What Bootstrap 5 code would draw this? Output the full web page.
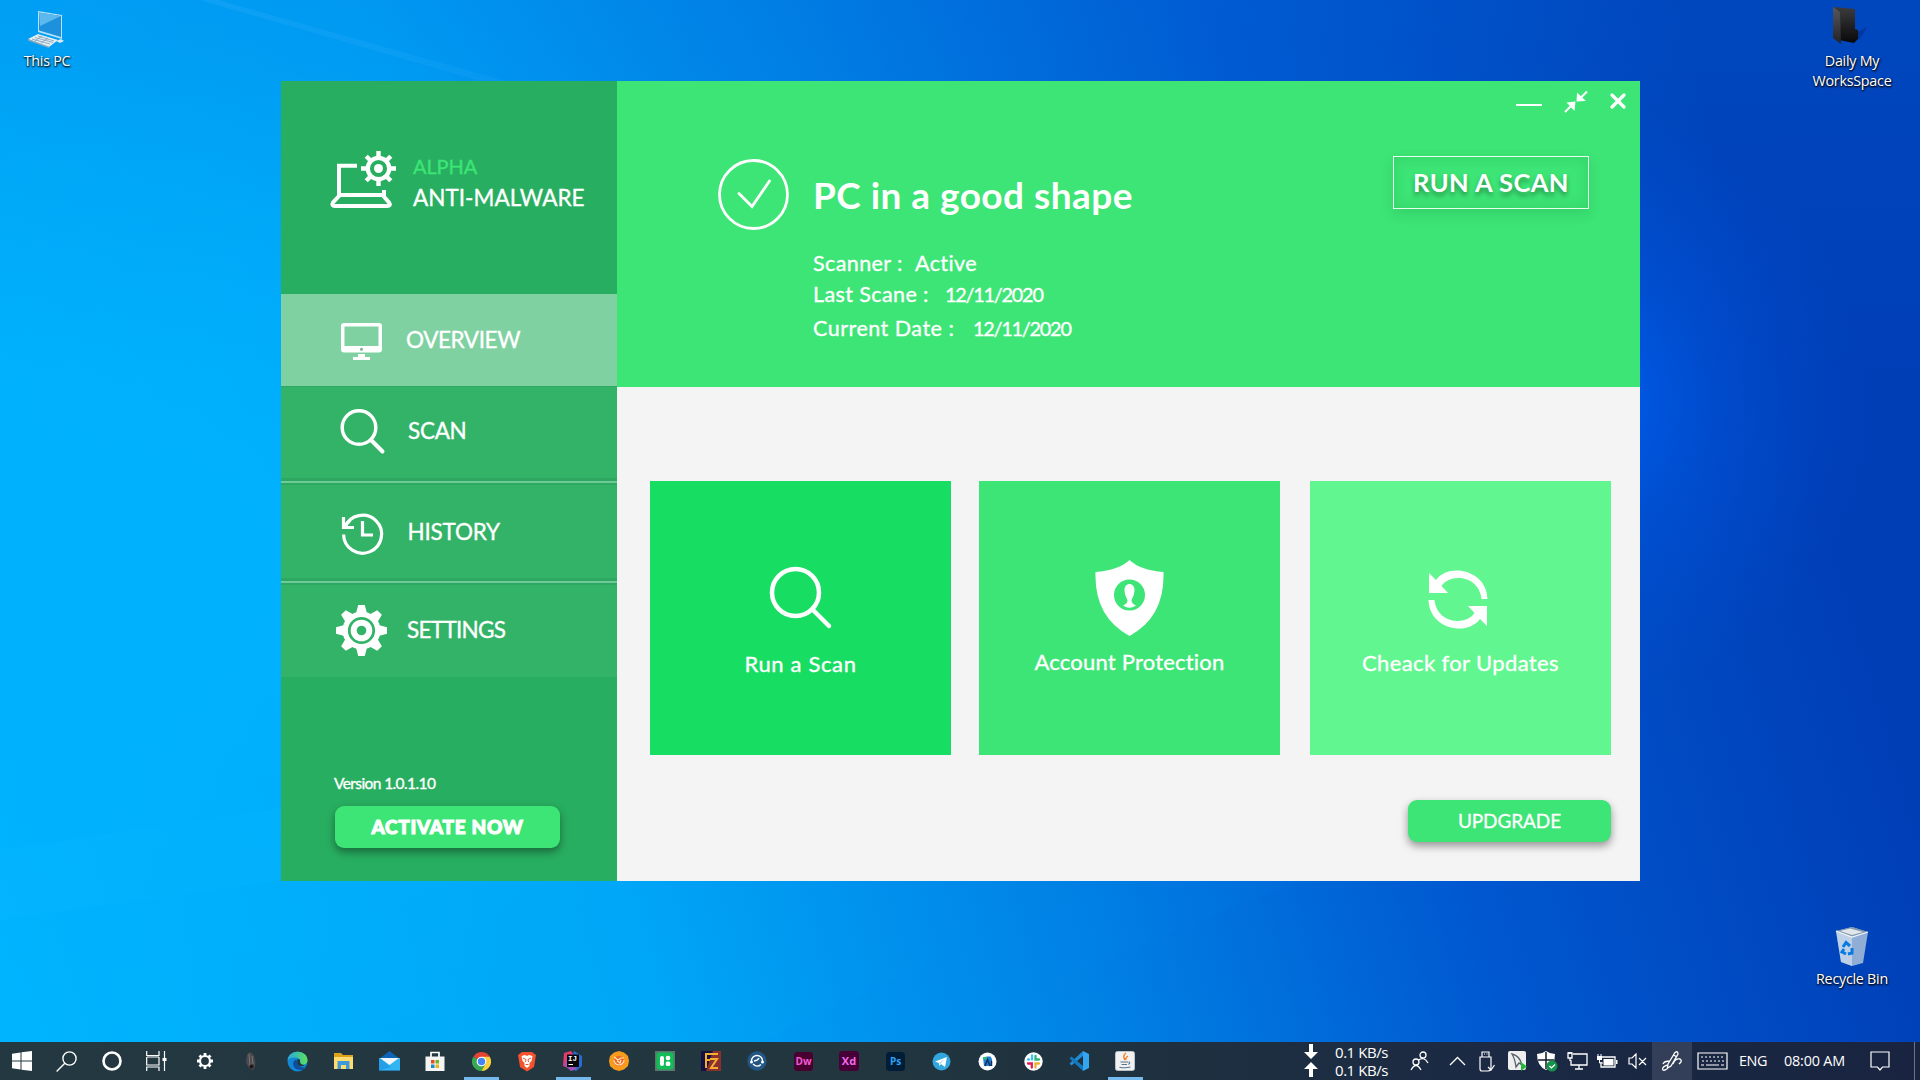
<!DOCTYPE html>
<html lang="en">
<head>
<meta charset="utf-8">
<meta name="viewport" content="width=device-width, initial-scale=1">
<title>Alpha Anti-Malware</title>
<link href="https://cdn.jsdelivr.net/npm/bootstrap@5.3.0/dist/css/bootstrap.min.css" rel="stylesheet">
<style>
  html, body { height: 100%; }
  body { margin: 0; overflow: hidden; font-family: Lato, "Liberation Sans", sans-serif; font-variant-ligatures: none; background: #0078e0; }
  svg { display: block; flex: none; }
  .desktop { width: 1920px; height: 1080px; }
  .wallpaper { position: absolute; left: 0; top: 0; }

  /* desktop shortcuts */
  .shortcut { position: absolute; width: 110px; font: 14.3px/20px "Open Sans", "Noto Sans", sans-serif; letter-spacing: -.25px; text-shadow: 0 1px 2px #000, 1px 1px 2px rgba(0,0,0,.7); }
  .at-pc { left: -8px; top: 9px; }
  .at-work { left: 1797px; top: 5px; }
  .at-work svg { margin-right: 4px; }
  .at-bin { left: 1797px; top: 922px; }

  /* application window */
  .app-window { position: absolute; left: 281px; top: 81px; width: 1359px; height: 800px; }
  .app-side { width: 336px; background: #28ae60; -webkit-text-stroke: .35px currentColor; }
  .brand-row { height: 213px; padding: 69px 0 0 48px; gap: 15px; }
  .brand-top { font-size: 20px; line-height: 24px; color: #3ce575; padding-top: 4px; letter-spacing: -.1px; }
  .brand-name { font-size: 22.5px; line-height: 24px; margin-top: 8px; letter-spacing: .03px; white-space: nowrap; }
  .side-link { height: 98px; padding-left: 52px; background: #33b368; color: #fff; font-size: 22.5px; gap: 17px; border: 0; border-radius: 0; }
  .side-link svg { margin: 0 -2px 0 -2px; }
  .side-link.is-current { height: 92px; background: #7fd1a2; }
  .side-link.is-scan { height: 95px; padding-bottom: 5px; box-shadow: inset 0 1px #2da762, inset 0 -3px #2da762; }
  .side-link.is-hist { height: 100px; border-top: 2px solid #6fcb95; box-shadow: inset 0 2px #2da762, inset 0 -3px #2da762; }
  .side-link.is-hist svg { margin-top: 3px; }
  .side-link.is-set { height: 96px; border-top: 2px solid #6fcb95; box-shadow: inset 0 2px #2da762; }
  .t-over { letter-spacing: -.4px; } .t-scan { letter-spacing: -.3px; padding-left: 2px; }
  .t-hist { letter-spacing: -.2px; padding-left: 1.5px; } .t-set { letter-spacing: -.7px; padding-left: 1px; }
  .side-foot { padding: 0 0 33px 54px; }
  .version { font-size: 15.5px; line-height: 20px; margin: 0 0 13px -1px; letter-spacing: -.6px; }
  .pill { height: 42px; border: 0; border-radius: 9px; background: #3ce575; color: #fff; padding: 0; box-shadow: 0 4px 9px rgba(0,0,0,.4); }
  .pill-act { width: 225px; font-size: 19px; font-weight: 900; letter-spacing: .7px; -webkit-text-stroke: 1.1px #fff; }
  .pill-upg { width: 203px; font-size: 19px; letter-spacing: -.1px; -webkit-text-stroke: .3px #fff; }

  .status { height: 306px; background: #3ce575; padding: 0; }
  .status-left { padding: 78px 0 0 101px; gap: 24px; }
  .status-title { font-size: 37px; line-height: 72px; height: 70px; font-weight: 700; letter-spacing: .45px; white-space: nowrap; }
  .fact { height: 31px; font-size: 21.5px; line-height: 31px; white-space: nowrap; -webkit-text-stroke: .35px #fff; letter-spacing: .4px; }
  .fact span { display: inline-block; }
  .fact .day { font-size: 19.8px; letter-spacing: -1.2px; }
  .w-scanner { width: 102px; } .w-last { width: 132px; } .w-current { width: 160px; letter-spacing: .5px; }
  .fact-first { margin-top: 19px; }
  .fact-last { margin-top: 3px; }
  .win-tools { padding: 9px 13px 0 0; height: 34px; }
  .btn-scan { width: 196px; height: 53px; border: 1px solid #e6ffee; border-radius: 0; color: #fff; font-size: 25.5px; font-weight: 700; letter-spacing: .45px; padding: 0; margin: 41px 51px 0 0; text-shadow: 0 4px 5px rgba(0,0,0,.35); box-shadow: inset 0 0 14px rgba(0,70,20,.12), 0 5px 12px rgba(0,70,20,.13); }
  .main-area { background: #f4f4f4; padding: 94px 29px 39px 33px; }
  .tile { width: 301px; height: 274px; border: 0; border-radius: 0; color: #fff; font-size: 22px; }
  .tile span { line-height: 28px; white-space: nowrap; -webkit-text-stroke: .35px #fff; }
  .tile-1 { background: #18dd63; padding-top: 85px; }
  .tile-2 { background: #3ce575; padding-top: 78px; margin-left: 28px; }
  .tile-3 { background: #61f68f; padding-top: 89px; margin-left: 30px; }
  .tile-3 svg { margin-right: 6px; }
  .c-scan { margin-top: 20px; letter-spacing: .65px; } .c-acc { margin-top: 11px; letter-spacing: .2px; } .c-upd { margin-top: 19px; letter-spacing: .38px; }

  /* taskbar */
  .taskbar { position: absolute; left: 0; top: 1042px; width: 1920px; height: 38px; background: linear-gradient(90deg, #233840 0, #21363f 45%, #1e3040 62%, #1b2944 78%, #182440 100%); font: 14.4px/18px "Open Sans", "Noto Sans", sans-serif; }
  .slot { width: 46px; height: 38px; display: flex; align-items: center; justify-content: center; flex: none; }
  .slot.sys { width: 45px; }
  .slot.first-slot { width: 44px; }
  .slot.view { width: 48px; padding-right: 4px; }
  .slot.open { background: linear-gradient(#76b9ed, #76b9ed) center bottom / 35px 3px no-repeat; }
  .tray { width: 30px; height: 38px; display: flex; align-items: center; justify-content: center; flex: none; }
  .tray.pen { width: 40px; background: #333f58; }
  .tray-people { width: 44px; }
  .tray-keys { width: 40px; }
  .tray-note { width: 37px; }
  .net { width: 63px; letter-spacing: -.45px; font-size: 15px; white-space: nowrap; }
  .lang { width: 43px; padding-left: 7px; letter-spacing: -.4px; }
  .clock { width: 86px; padding-left: 9px; letter-spacing: -.2px; white-space: nowrap; }
  .peek { width: 22px; height: 38px; padding-left: 16px; }
</style>
</head>
<body>
<div class="desktop position-relative overflow-hidden text-white">

<svg class="wallpaper" width="1920" height="1080" viewBox="0 0 1920 1080">
  <defs>
    <linearGradient id="sky" x1="0" y1="950" x2="1800" y2="430" gradientUnits="userSpaceOnUse">
      <stop offset="0" stop-color="#00b4fd"/><stop offset=".33" stop-color="#00a6f7"/><stop offset=".55" stop-color="#0082e5"/><stop offset=".76" stop-color="#0058d0"/><stop offset="1" stop-color="#003eb6"/>
    </linearGradient>
    <radialGradient id="glow" cx="1570" cy="400" r="300" gradientUnits="userSpaceOnUse">
      <stop offset="0" stop-color="#0064fa" stop-opacity=".9"/><stop offset=".45" stop-color="#0058e6" stop-opacity=".45"/><stop offset="1" stop-color="#0050d8" stop-opacity="0"/>
    </radialGradient>
    <radialGradient id="leftglow" cx="200" cy="560" r="520" gradientUnits="userSpaceOnUse">
      <stop offset="0" stop-color="#00b4ff" stop-opacity=".8"/><stop offset="1" stop-color="#00b0ff" stop-opacity="0"/>
    </radialGradient>
    <linearGradient id="topshade" x1="0" y1="0" x2="0" y2="1"><stop offset="0" stop-color="#0068dc" stop-opacity=".22"/><stop offset=".35" stop-color="#0068dc" stop-opacity="0"/></linearGradient>
    <linearGradient id="beam" x1="200" y1="0" x2="620" y2="90" gradientUnits="userSpaceOnUse"><stop offset="0" stop-color="#3fb8ff" stop-opacity=".22"/><stop offset="1" stop-color="#2aa4ff" stop-opacity=".12"/></linearGradient>
  </defs>
  <rect width="1920" height="1080" fill="url(#sky)"/>
  <rect width="1920" height="1080" fill="url(#topshade)"/>
  <rect width="1920" height="1080" fill="url(#leftglow)"/>
  <rect width="1920" height="1080" fill="url(#glow)"/>
  <path d="M200 0H218L505 81H480Z" fill="url(#beam)"/>
  <path d="M0 850L281 808V881L0 920Z" fill="#2ac4ff" fill-opacity=".06"/>
  <path d="M760 1042L1110 881H1300L900 1042Z" fill="#0090f0" fill-opacity=".08"/>
</svg>

<div class="shortcut at-pc d-flex flex-column align-items-center text-center">
  <svg width="40" height="42" viewBox="0 0 40 42"><path d="M11 2L35 6V30L11 23Z" fill="#b9e2f8"/><path d="M12 3.500L34 7V28L12 21.500Z" fill="#1e91dc"/><path d="M12 3.500L34 7L13 17Z" fill="#5bb9ee"/><path d="M1 30L11 25L31 31L22 38Z" fill="#e4eef5"/><path d="M1 30L22 37.500V39L1 31.500Z" fill="#96aab8"/><path d="M5 30L23 35M8 28.500L26 33.500M11 27L27 32M8 32L15 27M14 34L21 29" stroke="#7d9cb2" stroke-width=".8"/><path d="M29 32L34 30L37 32L33 34Z" fill="#dce9f2"/></svg>
  <div>This PC</div>
</div>
<div class="shortcut at-work d-flex flex-column align-items-center text-center">
  <svg width="46" height="46" viewBox="0 0 46 46"><defs><linearGradient id="fold" x2="0" y2="1"><stop stop-color="#3c3c40"/><stop offset="1" stop-color="#08080a"/></linearGradient><linearGradient id="flap" x2="0" y2="1"><stop stop-color="#58585c"/><stop offset="1" stop-color="#222226"/></linearGradient></defs><path d="M29 28L40 22L32 35Z" fill="#02277c" opacity=".5"/><path d="M7 2L28 4V24L31 25V34L27 38L12 35Z" fill="url(#fold)"/><path d="M6 2L13 7L14 39L6 33Z" fill="url(#flap)"/></svg>
  <div>Daily My<br>WorksSpace</div>
</div>
<div class="shortcut at-bin d-flex flex-column align-items-center text-center">
  <svg width="40" height="47" viewBox="0 0 40 47"><path d="M4 9L20 5L36 10L31 41L20 44L9 40Z" fill="#b4c8dc" fill-opacity=".8"/><path d="M4 9L20 14L20 44L9 40Z" fill="#dde8f1" fill-opacity=".6"/><path d="M4 9L20 5L36 10L20 15Z" fill="#8298ab"/><path d="M8 9L18 6.500L31 10L20 13Z" fill="#dfe6ec"/><path d="M4 9L20 15L36 10" fill="none" stroke="#eef6fb" stroke-width="1.200"/><g fill="none" stroke="#087be0" stroke-width="3"><path d="M11 25L14 20.500L18 24M20 26L20 31L16 32M14 32L10 30L12 27"/></g></svg>
  <div>Recycle Bin</div>
</div>

<main class="app-window d-flex">
  <aside class="app-side d-flex flex-column">
    <div class="brand-row d-flex">
      <svg width="69" height="60" viewBox="329 150 69 60" fill="none" stroke="#fff">
        <path d="M357 165.800H339V195M337 195H384V190" stroke-width="4"/>
        <path d="M340 195L333 202.500Q331 206 335 206H387Q391.500 206 389 202.500L382.500 195" stroke-width="4"/>
        <circle cx="378.500" cy="168.500" r="10.700" stroke-width="4.300"/><circle cx="378.500" cy="168.500" r="4.500" fill="#fff" stroke="none"/>
        <path d="M378.500 151V158M378.500 179V186M361 168.500H368M389 168.500H396M366.200 156.200L371 161M386 176L390.800 180.800M366.200 180.800L371 176M386 161L390.800 156.200" stroke-width="4.400"/>
      </svg>
      <div><div class="brand-top">ALPHA</div><div class="brand-name">ANTI-MALWARE</div></div>
    </div>
    <nav class="list-group list-group-flush">
      <a class="side-link is-current d-flex align-items-center text-decoration-none">
        <svg width="60" height="60" viewBox="331 310 60 60"><path d="M344 323H379Q382 323 382 326V349Q382 352.500 379 352.500H344Q341 352.500 341 349V326Q341 323 344 323ZM344.500 326.500V346H378.500V326.500Z" fill="#fff" fill-rule="evenodd"/><circle cx="361.500" cy="349.200" r="1.500" fill="#73b58f"/><path d="M358 354H365V357H370V360H353V357H358Z" fill="#fff"/></svg>
        <span class="t-over">OVERVIEW</span></a>
      <a class="side-link is-scan d-flex align-items-center text-decoration-none">
        <svg width="60" height="60" viewBox="331 401 60 60" fill="none" stroke="#fff" stroke-width="3.500" stroke-linecap="round"><circle cx="359" cy="427.500" r="16.800"/><path d="M371 440L382.500 451.500" stroke-width="4"/></svg>
        <span class="t-scan">SCAN</span></a>
      <a class="side-link is-hist d-flex align-items-center text-decoration-none">
        <svg width="60" height="60" viewBox="331 502 60 60" fill="none" stroke="#fff" stroke-width="3.200"><path d="M345 525A19 19 0 1 1 343.600 532.500"/><path d="M343.500 515V525.500H354M344 525L350 518.500"/><path d="M362.500 519V533H373"/></svg>
        <span class="t-hist">HISTORY</span></a>
      <a class="side-link is-set d-flex align-items-center text-decoration-none">
        <svg width="60" height="60" viewBox="-30.500 -30.500 60 60"><g fill="#fff"><circle r="19"/><g id="tooth"><path d="M-5.500 -17L-3.300 -25.500H3.300L5.500 -17ZM-5.500 17L-3.300 25.500H3.300L5.500 17Z"/><path d="M-17 -5.500L-25.500 -3.300V3.300L-17 5.500ZM17 -5.500L25.500 -3.300V3.300L17 5.500Z"/></g><use href="#tooth" transform="rotate(45)"/></g><circle r="12.200" fill="none" stroke="#33b368" stroke-width="2.800"/><circle r="4.800" fill="#33b368"/></svg>
        <span class="t-set">SETTINGS</span></a>
    </nav>
    <div class="side-foot mt-auto">
      <div class="version">Version 1.0.1.10</div>
      <button class="btn pill pill-act">ACTIVATE NOW</button>
    </div>
  </aside>

  <div class="flex-grow-1 d-flex flex-column">
    <header class="status d-flex justify-content-between">
      <div class="status-left d-flex">
        <svg width="71" height="71" viewBox="0 0 71 71" fill="none" stroke="#fff" stroke-width="2.800"><circle cx="35.500" cy="35.500" r="34"/><path d="M21 34.500L34 47.500L51.500 22" stroke-linecap="round"/></svg>
        <div>
          <div class="status-title">PC in a good shape</div>
          <div class="fact fact-first"><span class="w-scanner">Scanner :</span><span>Active</span></div>
          <div class="fact"><span class="w-last">Last Scane :</span><span class="day">12/11/2020</span></div>
          <div class="fact fact-last"><span class="w-current">Current Date :</span><span class="day">12/11/2020</span></div>
        </div>
      </div>
      <div class="d-flex flex-column align-items-end">
        <div class="win-tools d-flex">
          <svg width="112" height="25" viewBox="1515 90 112 25" fill="none" stroke="#fff"><path d="M1516 105H1542" stroke-width="2"/><path d="M1565 112L1572 105M1587 91.500L1579 99.500" stroke-width="2"/><path d="M1566.500 102.500L1575.500 101.500L1574.500 111Z" fill="#fff" stroke="none"/><path d="M1577 92.500L1576.500 101.500L1586 101Z" fill="#fff" stroke="none"/><path d="M1612 95L1624 107M1624 95L1612 107" stroke-width="3.300" stroke-linecap="round"/></svg>
        </div>
        <button class="btn btn-scan">RUN A SCAN</button>
      </div>
    </header>
    <section class="main-area flex-grow-1 d-flex flex-column">
      <div class="d-flex">
        <div class="card tile tile-1 align-items-center">
          <svg width="64" height="64" viewBox="769 566 64 64" fill="none" stroke="#fff" stroke-width="4.500" stroke-linecap="round"><circle cx="795.500" cy="592.500" r="23.500"/><path d="M812.500 609.500L829 626"/></svg>
          <span class="c-scan">Run a Scan</span>
        </div>
        <div class="card tile tile-2 align-items-center">
          <svg width="70" height="78" viewBox="1095 559 70 78"><path d="M1129.500 560Q1140 570 1163.500 572Q1165 617 1129.500 636Q1094 617 1095.500 572Q1119 570 1129.500 560Z" fill="#fff"/><circle cx="1129.500" cy="595" r="15.500" fill="#3ce575"/><path d="M1124.500 590C1124.500 582 1134.500 582 1134.500 590C1134.500 594 1133 597 1131.500 600C1131.500 603 1133 604 1136 605.500Q1129.500 610 1123 605.500C1126 604 1127.500 603 1127.500 600C1126 597 1124.500 594 1124.500 590Z" fill="#fff"/></svg>
          <span class="c-acc">Account Protection</span>
        </div>
        <div class="card tile tile-3 align-items-center">
          <svg width="60" height="60" viewBox="1428 570 60 60"><g id="half" fill="#fff"><path d="M1429 573V593H1448L1441.500 586C1450 573 1479 575 1481.500 599H1487.500C1487 570 1449 562 1436 580Z"/></g><use href="#half" transform="rotate(180 1458 599.500)"/></svg>
          <span class="c-upd">Cheack for Updates</span>
        </div>
      </div>
      <div class="d-flex justify-content-end mt-auto"><button class="btn pill pill-upg">UPDGRADE</button></div>
    </section>
  </div>
</main>

<footer class="taskbar d-flex justify-content-between">
  <div class="d-flex">
    <div class="slot first-slot"><svg width="20" height="20" viewBox="0 0 20 20" fill="#fff"><path d="M0 2.700L8.500 1.500V9.500H0ZM9.500 1.300L20 0V9.500H9.500ZM0 10.500H8.500V18.500L0 17.300ZM9.500 10.500H20V20L9.500 18.700Z"/></svg></div>
    <div class="slot sys"><svg width="21" height="21" viewBox="0 0 21 21" fill="none" stroke="#fff" stroke-width="1.400"><circle cx="13.500" cy="7.500" r="6.600"/><path d="M8.800 12.200L.6 20.400"/></svg></div>
    <div class="slot sys"><svg width="20" height="20"><circle cx="10" cy="10" r="8.500" fill="none" stroke="#fff" stroke-width="2.600"/></svg></div>
    <div class="slot view"><svg width="21" height="20" fill="none" stroke="#fff" stroke-width="1.200"><path d="M.7 0V4.500H13V0M.7 20V16H13V20M.7 6V14H13V6M1 6H13M18.500 0V20"/><path d="M16.500 7H20.500V10H16.500Z" fill="#fff" stroke="none"/></svg></div>
    <div class="slot"><svg width="18" height="18" viewBox="-9 -9 18 18" fill="none" stroke="#fff"><circle r="5" stroke-width="2.200"/><g stroke-width="2.800"><path d="M0-8V-5M0 8V5M-8 0H-5M8 0H5M-5.500-5.500L-3.700-3.700M5.500 5.500L3.700 3.700M-5.500 5.500L-3.700 3.700M5.500-5.500L3.700-3.700"/></g></svg></div>
    <div class="slot"><svg width="12" height="20"><path d="M2 4Q5-2 9 5Q12 15 8 19Q2 17 1 10Z" fill="#4d4a4d"/><path d="M4 3L5 15M7 5L8 13" stroke="#777476" stroke-width="1"/><circle cx="6.500" cy="15.500" r="2" fill="#241316"/></svg></div>
    <div class="slot"><svg width="21" height="21" viewBox="0 0 21 21"><defs><linearGradient id="eg"><stop stop-color="#27a9e0"/><stop offset="1" stop-color="#5ce15b"/></linearGradient></defs><circle cx="10.500" cy="10.500" r="10" fill="#1287d5"/><path d="M.5 9.500C1-2.500 20.500-2 20.500 9C20.500 14.500 13.500 15 12.500 12.500C14.500 10 12 6.500 8.500 6.500C4 6.500 1 8 .5 9.500Z" fill="url(#eg)"/><path d="M9.500 8.500C4 9.500 5 19 13.500 19C16 19 18 17.500 19 16C14 18 10 14 9.500 8.500Z" fill="#0c4f9d"/><path d="M10 9Q13.500 6.500 13 11Q13.500 14 18 14Q13 17 10.500 13Z" fill="#21363f"/></svg></div>
    <div class="slot"><svg width="19" height="18"><path d="M0 1H7L9 3H19V17H0Z" fill="#dda21b"/><path d="M0 5H19V17H0Z" fill="#ffdc72"/><path d="M3.500 17V9H15.500V17H12V13H7V17Z" fill="#3e9ad6"/></svg></div>
    <div class="slot"><svg width="21" height="20"><path d="M0 8L10.500 0L21 8V19.500H0Z" fill="#0e65b8"/><path d="M0 7H21V19.500H0Z" fill="#31b5f2"/><path d="M1 7H20L10.500 14Z" fill="#f0f6fb"/><path d="M0 7L12 16L0 19.500Z" fill="#1688db" opacity=".5"/></svg></div>
    <div class="slot"><svg width="20" height="21"><path d="M6 6V1.500H14V6" fill="none" stroke="#fff" stroke-width="1.700"/><path d="M.5 5.500H19.500V20H.5Z" fill="#f5f5f5"/><path fill="#e84c22" d="M6 9H9.500V12.500H6Z"/><path fill="#73b51c" d="M10.500 9H14V12.500H10.500Z"/><path fill="#168dd2" d="M6 13.500H9.500V17H6Z"/><path fill="#f0b316" d="M10.500 13.500H14V17H10.500Z"/></svg></div>
    <div class="slot open"><svg width="19" height="19" viewBox="-10 -10 20 20"><path d="M0 0L-8.500-5A10 10 0 0 1 8.700-5Z" fill="#e34435"/><path d="M0 0L-8.700-5A10 10 0 0 0 0 10L4.500 2Z" fill="#38a852"/><path d="M0-5H8.700A10 10 0 0 1 0 10L5 1Z" fill="#fcd03d"/><circle r="5.100" fill="#fff"/><circle r="3.900" fill="#4285f4"/></svg></div>
    <div class="slot"><svg width="18" height="21" viewBox="0 0 18 21"><path d="M4 1H14L18 4L16 16L9 20.500L2 16L0 4Z" fill="#f4512c"/><path d="M3.500 5L7 4L9 5L11 4L14.500 5L13.500 10L11.500 12V15L9 17L6.500 15V12L4.500 10Z" fill="#fff"/><path d="M5 7L8 8.500L7.500 11M13 7L10 8.500L10.500 11M7.500 13.500H10.500" fill="none" stroke="#f4512c" stroke-width="1"/></svg></div>
    <div class="slot open"><svg width="20" height="20" viewBox="0 0 20 20"><path d="M1 2L8 0L12 5L5 17L0 15Z" fill="#e33c70"/><path d="M11 0L19 5V15L13 20L7 17Z" fill="#256ed0"/><path d="M1 14L8 20L14 18L4 9Z" fill="#9d53bb"/><path d="M4 3.500H16V16H4Z" fill="#080808"/><text x="5" y="10" font-size="7.500" font-weight="700" font-family="Liberation Mono, monospace" fill="#fff">IJ</text><path d="M5.500 13.500H10" stroke="#fff"/></svg></div>
    <div class="slot"><svg width="20" height="20" viewBox="-10 -10 20 20"><path d="M0-10L5-8.500L9-5L10 0L9 5L5 8.500L0 10L-5 8.500L-9 5L-10 0L-9-5L-5-8.500Z" fill="#f89b1c"/><circle r="5.300" fill="#ef6628"/><path d="M-5-4L-1-1L2-3L5-3M5-1A5 5 0 1 1-5-1M-2 0L1 2L2-1" fill="none" stroke="#ffe7ba" stroke-width="1.200"/></svg></div>
    <div class="slot"><svg width="20" height="20"><path d="M0 0H20V20H0Z" fill="#57796d"/><rect x="1.500" y="1.500" width="17" height="17" rx="3" fill="#12bd58"/><rect x="5" y="5" width="4" height="10" rx="2" fill="#fff"/><circle cx="13" cy="7" r="2.300" fill="#fff"/><rect x="10.800" y="10.500" width="4.500" height="4.500" rx="1.500" fill="#fff"/></svg></div>
    <div class="slot"><svg width="20" height="20"><path d="M0 0H20V20H0Z" fill="#151243"/><path d="M12 0H20V20H5Z" fill="#8a302e"/><path d="M5 17V3H17M5 9H9M9 8H16L10 17H17" fill="none" stroke="#f6ae2e" stroke-width="2"/></svg></div>
    <div class="slot"><svg width="20" height="20"><circle cx="10" cy="10" r="9.700" fill="#245683"/><path d="M4.500 10A5.500 5.500 0 1 1 15.500 10M6 13Q10 17 14 13.500M7 10Q11 9.500 12 7" fill="none" stroke="#fff" stroke-width="1.400"/><circle cx="4.500" cy="11" r="1.500" fill="#fff"/><circle cx="15.500" cy="11" r="1.500" fill="#fff"/></svg></div>
    <div class="slot"><svg width="19" height="19"><rect width="19" height="19" rx="3.500" fill="#47002f"/><text x="9.500" y="13" text-anchor="middle" font-size="10" font-weight="700" font-family="Open Sans, sans-serif" fill="#f45bd4">Dw</text></svg></div>
    <div class="slot"><svg width="20" height="20"><rect width="20" height="20" rx="3.500" fill="#470037"/><text x="10" y="14" text-anchor="middle" font-size="11" font-weight="700" font-family="Open Sans, sans-serif" fill="#f26bea">Xd</text></svg></div>
    <div class="slot"><svg width="19" height="19"><rect width="19" height="19" rx="3.500" fill="#001d38"/><text x="9.500" y="13" text-anchor="middle" font-size="10" font-weight="700" font-family="Open Sans, sans-serif" fill="#31a0f5">Ps</text></svg></div>
    <div class="slot"><svg width="19" height="19"><circle cx="9.500" cy="9.500" r="9" fill="#31a7dd"/><path d="M3 9.500L15 5L13 15L9 12L7.500 14L6.800 11Z" fill="#fff"/><path d="M7 11L12.500 7L8.500 12Z" fill="#b9d9e9"/></svg></div>
    <div class="slot"><svg width="19" height="19"><circle cx="9.500" cy="9.500" r="9" fill="#fff"/><path d="M5 5.500L9 4.500H12.500L14 7V14H6Z" fill="#247ed5"/><path d="M5 5H9V7.500H5Z" fill="#2abf77"/><path d="M7 14L9.500 7.500L12 14M13.500 9V14" fill="none" stroke="#10305e" stroke-width="1.500"/></svg></div>
    <div class="slot"><svg width="19" height="19"><circle cx="9.500" cy="9.500" r="9.200" fill="#fff"/><g stroke-width="2.300" stroke-linecap="round"><path d="M8 3.500V7.500M4 7.500H5" stroke="#36c5f0"/><path d="M11.500 4V7.500H15" stroke="#2eb67d" fill="none"/><path d="M11.500 15.500V11.500H15" stroke="#ecb22e" fill="none"/><path d="M7.800 15.500V11.500H4" stroke="#e01e5a" fill="none"/></g></svg></div>
    <div class="slot"><svg width="20" height="20"><path d="M14 0L20 3V17L14 20Z" fill="#34a5ee"/><path d="M14 5L2.500 14.500L.5 12.500L14 0Z" fill="#228bd5"/><path d="M14 15L2.500 5.500L.5 7.500L14 20Z" fill="#1478bd"/></svg></div>
    <div class="slot open"><svg width="20" height="20"><rect x=".5" y=".5" width="19" height="19" rx="2" fill="#f1f1f1" stroke="#b9c2c7"/><path d="M11 2Q7 5 10 9M13 5Q10 7 11 9" fill="none" stroke="#ef7d23" stroke-width="1.400"/><path d="M5.500 11H13M6.500 13.500H12M4.500 16.200Q10 17.500 15.500 16M13.500 11Q16 11 13.500 13.500" fill="none" stroke="#55758d" stroke-width="1.100"/></svg></div>
  </div>

  <div class="d-flex align-items-center">
    <svg class="me-3" width="16" height="34" viewBox="0 0 16 34" fill="#fff"><path d="M6 0H10V8H15L8 15L1 8H6Z"/><path d="M6 33H10V25H15L8 18L1 25H6Z"/></svg>
    <div class="net">0.1 KB/s<br>0.1 KB/s</div>
    <div class="tray tray-people"><svg width="20" height="20" fill="none" stroke="#fff" stroke-width="1.300"><circle cx="13" cy="4" r="3"/><path d="M8.500 9Q14 5 18 12"/><circle cx="6" cy="11" r="3"/><path d="M1 19Q6 10 11 19"/></svg></div>
    <div class="tray"><svg width="17" height="10" fill="none" stroke="#fff" stroke-width="1.300"><path d="M1 9L8.500 1.500L16 9"/></svg></div>
    <div class="tray"><svg width="16" height="21" fill="none" stroke="#fff" stroke-width="1.200"><path d="M3 6V1H10V6M1 6H12V17Q12 20 9 20H3Q1 20 1 18ZM5 3H6M7.500 3H8.500"/><path d="M9 16L12 19L15.500 14"/></svg></div>
    <div class="tray"><svg width="19" height="20"><rect width="18" height="19" rx="2" fill="#eee"/><path d="M4 3Q12 5 14 14L11 12L8 16Q7 8 4 3Z" fill="none" stroke="#56636a" stroke-width="1.300"/><path d="M13 11L19 15.500L13 20Z" fill="#28b73d"/></svg></div>
    <div class="tray"><svg width="21" height="21"><path d="M9 0Q13 3 18 3Q18 15 9 19Q0 15 0 3Q5 3 9 0Z" fill="#fff"/><path d="M9 1V18M1 9H17" stroke="#111b25" stroke-width="1.500"/><circle cx="15" cy="15" r="5.500" fill="#16924b"/><path d="M12.500 15L14.500 17L18 13.500" fill="none" stroke="#fff" stroke-width="1.200"/></svg></div>
    <div class="tray"><svg width="21" height="18" fill="none" stroke="#fff" stroke-width="1.300"><path d="M6 2H20V13H4V8M12 13V17M8 17H16"/><path d="M1 1H5V6H1ZM3 6V9M2 0V2M4 0V2"/></svg></div>
    <div class="tray"><svg width="22" height="17"><path d="M6 4H19V14H5V9" fill="none" stroke="#fff" stroke-width="1.300"/><path d="M7.500 6H17.500V12.500H7.500ZM20 7H21.500V11H20ZM1 3H6V7H1Z" fill="#fff"/><path d="M2 1V4M5 1V4M3.500 7V10H7" stroke="#fff" fill="none"/></svg></div>
    <div class="tray"><svg width="19" height="16" fill="none" stroke="#fff" stroke-width="1.200"><path d="M1 5H4L8 1V15L4 11H1ZM11 5L18 12M18 5L11 12"/></svg></div>
    <div class="tray pen"><svg width="22" height="22" fill="none" stroke="#fff" stroke-width="1.300"><path d="M7 14L14 2.500Q17 .5 17 4L10 16L6.500 18ZM9 11Q3 11 2 14M7 18Q2 22 1.500 19Q2 16 7 15M12 14Q14 8 19 9Q22 11 18 14M12.500 5L16 7"/></svg></div>
    <div class="tray tray-keys"><svg width="31" height="18" fill="none" stroke="#fff" stroke-width="1.200"><path d="M1 1H30V17H1Z"/><path d="M4 5H27M5 9H27" stroke-dasharray="2 2"/><path d="M4 13H7M9 13H22M24 13H27"/></svg></div>
    <div class="lang">ENG</div>
    <div class="clock">08:00 AM</div>
    <div class="tray tray-note"><svg width="20" height="20" fill="none" stroke="#fff" stroke-width="1.200"><path d="M1 1H19V16H12.500L10 19L7.500 16H1Z"/></svg></div>
    <div class="peek"><div class="h-100 border-start border-secondary"></div></div>
  </div>
</footer>
</div>
<script src="https://cdn.jsdelivr.net/npm/bootstrap@5.3.0/dist/js/bootstrap.bundle.min.js"></script>
</body>
</html>
